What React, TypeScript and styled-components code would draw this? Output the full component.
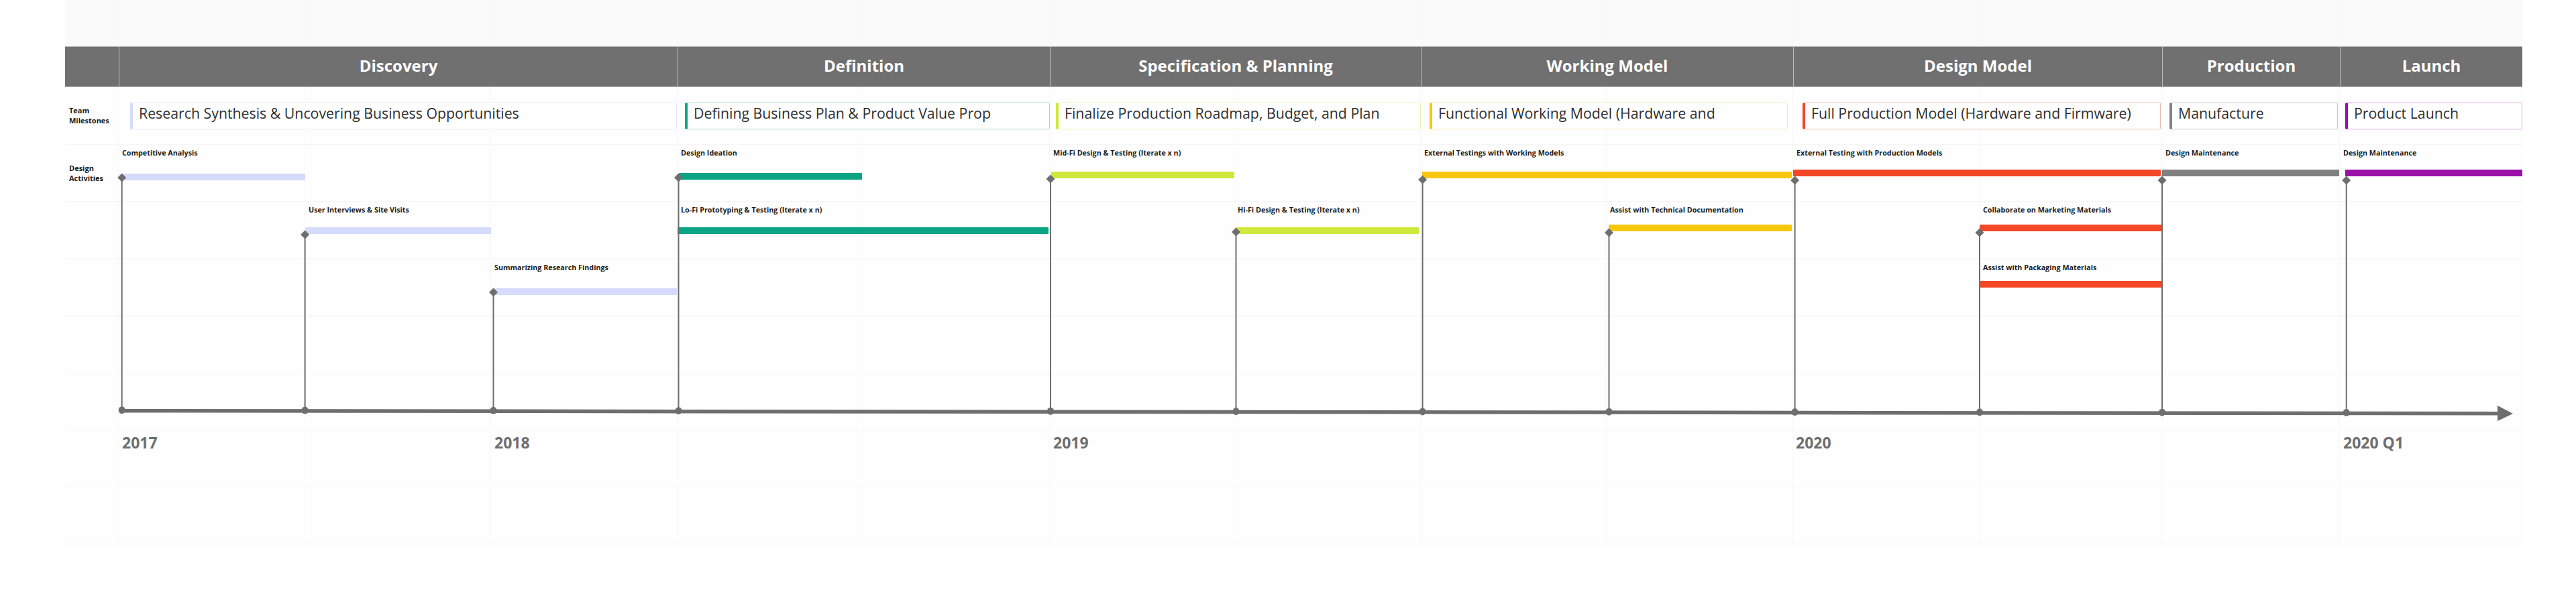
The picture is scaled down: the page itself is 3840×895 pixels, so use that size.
import styled, { createGlobalStyle } from "styled-components";

const ORIGIN_X = 97;
const ORIGIN_Y = 216;
const FONT = `"Open Sans", "Noto Sans", sans-serif`;
const AXIS_COLOR = "#6e6e6e";

const PHASE_TEMPLATE = "80px 833px 555px 553px 555px 550px 265px 272px";
const GRID_COLUMNS = [80, 278, 277, 278, 277, 278, 275, 278, 277, 278, 278, 272, 265, 272];
const GRID_ROWS = [69, 61, 86, 85, 85, 85, 86, 85, 85, 85];

const PHASES = [
    "Discovery",
    "Definition",
    "Specification & Planning",
    "Working Model",
    "Design Model",
    "Production",
    "Launch",
];

const MILESTONES = [
    { text: "Research Synthesis & Uncovering Business Opportunities", color: "#d5dbfa", edge: "#e6e9fa", left: 17, right: 1 },
    { text: "Defining Business Plan & Product Value Prop", color: "#0aa584", edge: "#a5d8cd", left: 11, right: 0 },
    { text: "Finalize Production Roadmap, Budget, and Plan", color: "#cfe83c", edge: "#e9f2b0", left: 9, right: 0 },
    { text: "Functional Working Model (Hardware and", color: "#f7c60f", edge: "#f8e9a8", left: 13, right: 8 },
    { text: "Full Production Model (Hardware and Firmware)", color: "#f34726", edge: "#e8bdb2", left: 14, right: 2 },
    { text: "Manufacture", color: "#808080", edge: "#c4c4c4", left: 11, right: 3 },
    { text: "Product Launch", color: "#990fa8", edge: "#d3a6da", left: 8, right: 0 },
];

const COLORS = {
    periwinkle: "#d5dbfa",
    teal: "#0aa584",
    lime: "#cfe83c",
    yellow: "#f7c60f",
    red: "#f34726",
    gray: "#808080",
    purple: "#990fa8",
};

const ACTIVITIES = [
    { label: "Competitive Analysis", labelX: 182, labelY: 228, x1: 182, x2: 455, y: 259, color: COLORS.periwinkle },
    { label: "User Interviews & Site Visits", labelX: 460, labelY: 313, x1: 455, x2: 732, y: 339, color: COLORS.periwinkle },
    { label: "Summarizing Research Findings", labelX: 737, labelY: 399, x1: 735, x2: 1009, y: 430, color: COLORS.periwinkle },
    { label: "Design Ideation", labelX: 1015, labelY: 228, x1: 1012, x2: 1285, y: 258, color: COLORS.teal },
    { label: "Lo-Fi Prototyping & Testing (Iterate x n)", labelX: 1015, labelY: 313, x1: 1010, x2: 1563, y: 339, color: COLORS.teal },
    { label: "Mid-Fi Design & Testing (Iterate x n)", labelX: 1570, labelY: 228, x1: 1567, x2: 1840, y: 256, color: COLORS.lime },
    { label: "Hi-Fi Design & Testing (Iterate x n)", labelX: 1845, labelY: 313, x1: 1842, x2: 2115, y: 339, color: COLORS.lime },
    { label: "External Testings with Working Models", labelX: 2123, labelY: 228, x1: 2120, x2: 2671, y: 256, color: COLORS.yellow },
    { label: "Assist with Technical Documentation", labelX: 2400, labelY: 313, x1: 2398, x2: 2671, y: 335, color: COLORS.yellow },
    { label: "External Testing with Production Models", labelX: 2678, labelY: 228, x1: 2673, x2: 3221, y: 253, color: COLORS.red },
    { label: "Collaborate on Marketing Materials", labelX: 2956, labelY: 313, x1: 2951, x2: 3223, y: 335, color: COLORS.red },
    { label: "Assist with Packaging Materials", labelX: 2956, labelY: 399, x1: 2952, x2: 3223, y: 419, color: COLORS.red },
    { label: "Design Maintenance", labelX: 3228, labelY: 228, x1: 3223, x2: 3487, y: 253, color: COLORS.gray },
    { label: "Design Maintenance", labelX: 3493, labelY: 228, x1: 3496, x2: 3760, y: 253, color: COLORS.purple },
];

// x of each vertical pin and the y of its diamond
const PINS = [
    { x: 181.7, y: 265 },
    { x: 454.6, y: 350 },
    { x: 735.5, y: 436 },
    { x: 1011.5, y: 265 },
    { x: 1566, y: 267 },
    { x: 1842.5, y: 346 },
    { x: 2120.6, y: 268 },
    { x: 2398.5, y: 347 },
    { x: 2675.6, y: 269 },
    { x: 2951, y: 347 },
    { x: 3223, y: 269 },
    { x: 3497.7, y: 269 },
];

const YEARS = [
    { text: "2017", x: 182 },
    { text: "2018", x: 737 },
    { text: "2019", x: 1570 },
    { text: "2020", x: 2677 },
    { text: "2020 Q1", x: 3493 },
];

const axisY = (x: number) => 612.7 + ((x - 182) * 4) / 3540;

const GlobalStyle = createGlobalStyle`
    html, body {
        margin: 0;
        padding: 0;
        background: #ffffff;
    }
`;

const Page = styled.div`
    width: 3840px;
    height: 895px;
    overflow: hidden;
    padding-left: ${ORIGIN_X}px;
    box-sizing: border-box;
    font-family: ${FONT};
`;

const Board = styled.div`
    position: relative;
    width: 3663px;
    height: 812px;
    padding-top: 69px;
    box-sizing: border-box;
`;

const Backdrop = styled.div`
    position: absolute;
    inset: 0;
    display: grid;
    grid-template-columns: ${GRID_COLUMNS.map((w) => `${w}px`).join(" ")};
    grid-template-rows: ${GRID_ROWS.map((h) => `${h}px`).join(" ")};
    background: #fefefe;
`;

const BackdropCell = styled.div<{ $shaded: boolean }>`
    box-sizing: border-box;
    background: ${({ $shaded }) => ($shaded ? "#fafafa" : "transparent")};
    border-right: 1px solid #f8f8f8;
    border-bottom: 1px solid #f6f6f6;
`;

const PhaseRow = styled.div`
    position: relative;
    display: grid;
    grid-template-columns: ${PHASE_TEMPLATE};
    height: 61px;
    box-sizing: border-box;
    background: #707070;
    border-top: 1px solid #b5b5b5;
    border-bottom: 1px solid #bcbcbc;
`;

const PhaseCell = styled.div`
    display: flex;
    align-items: center;
    justify-content: center;
    padding-bottom: 4px;
    box-sizing: border-box;
    border-left: 1px solid #bdbdbd;
    color: #ffffff;
    font-size: 24px;
    font-weight: 700;
    &:first-child {
        border-left: none;
    }
`;

const MilestoneRow = styled.div`
    position: relative;
    display: grid;
    grid-template-columns: ${PHASE_TEMPLATE};
    height: 86px;
`;

const RowLabel = styled.div`
    padding: 27px 0 0 6px;
    color: #1c1c1c;
    font-size: 11px;
    line-height: 15px;
    font-weight: 700;
`;

const MilestoneCell = styled.div<{ $left: number; $right: number }>`
    padding: 23px ${({ $right }) => $right}px 0 ${({ $left }) => $left}px;
`;

const MilestoneBox = styled.div<{ $color: string; $edge: string }>`
    height: 40px;
    box-sizing: border-box;
    padding-left: 9px;
    background: #ffffff;
    border: 1.5px solid ${({ $edge }) => $edge};
    border-left: 4px solid ${({ $color }) => $color};
    border-radius: 2px;
    color: #2f2f2f;
    font-size: 21.3px;
    line-height: 29px;
    white-space: nowrap;
    overflow: hidden;
`;

const Timeline = styled.div`
    position: relative;
    height: 596px;
`;

const ActivitiesLabel = styled.div`
    position: absolute;
    left: 6px;
    top: 27px;
    color: #1c1c1c;
    font-size: 11px;
    line-height: 15px;
    font-weight: 700;
`;

const TimelineArt = styled.svg`
    position: absolute;
    left: 0;
    top: 0;
    display: block;
`;

const ActivityLabel = styled.div<{ $x: number; $y: number }>`
    position: absolute;
    left: ${({ $x }) => $x - ORIGIN_X}px;
    top: ${({ $y }) => $y - ORIGIN_Y - 7}px;
    color: #1c1c1c;
    font-size: 10.75px;
    line-height: 14px;
    font-weight: 700;
    white-space: nowrap;
`;

const ActivityBar = styled.div<{ $x: number; $width: number; $y: number; $color: string }>`
    position: absolute;
    left: ${({ $x }) => $x - ORIGIN_X}px;
    top: ${({ $y }) => $y - ORIGIN_Y}px;
    width: ${({ $width }) => $width}px;
    height: 10px;
    background: ${({ $color }) => $color};
    border-radius: 1px;
`;

const YearLabel = styled.div<{ $x: number }>`
    position: absolute;
    left: ${({ $x }) => $x - ORIGIN_X}px;
    top: ${662 - ORIGIN_Y - 18}px;
    color: ${AXIS_COLOR};
    font-size: 23px;
    line-height: 32px;
    font-weight: 700;
    white-space: nowrap;
`;

const App = () => {
    return (
        <Page>
            <GlobalStyle />
            <Board>
                <Backdrop>
                    {GRID_ROWS.map((_, row) =>
                        GRID_COLUMNS.map((_, col) => (
                            <BackdropCell key={`${row}-${col}`} $shaded={row === 0} />
                        ))
                    )}
                </Backdrop>
                <PhaseRow>
                    <PhaseCell />
                    {PHASES.map((phase) => (
                        <PhaseCell key={phase}>{phase}</PhaseCell>
                    ))}
                </PhaseRow>
                <MilestoneRow>
                    <RowLabel>
                        Team
                        <br />
                        Milestones
                    </RowLabel>
                    {MILESTONES.map((m) => (
                        <MilestoneCell key={m.text} $left={m.left} $right={m.right}>
                            <MilestoneBox $color={m.color} $edge={m.edge}>
                                {m.text}
                            </MilestoneBox>
                        </MilestoneCell>
                    ))}
                </MilestoneRow>
                <Timeline>
                    <ActivitiesLabel>
                        Design
                        <br />
                        Activities
                    </ActivitiesLabel>
                    {ACTIVITIES.map((a, i) => (
                        <ActivityBar key={i} $x={a.x1} $width={a.x2 - a.x1} $y={a.y} $color={a.color} />
                    ))}
                    <TimelineArt width="3663" height="596" viewBox={`${ORIGIN_X} ${ORIGIN_Y} 3663 596`}>
                        <line x1="182" y1={axisY(182)} x2="3726" y2={axisY(3726)} stroke={AXIS_COLOR} strokeWidth="5.5" />
                        <polygon points="3723,605 3746,617 3723,628" fill={AXIS_COLOR} />
                        {PINS.map((p) => (
                            <g key={p.x} fill={AXIS_COLOR}>
                                <line x1={p.x} y1={p.y} x2={p.x} y2={axisY(p.x)} stroke={AXIS_COLOR} strokeWidth="2" />
                                <polygon points={`${p.x - 6.5},${p.y} ${p.x},${p.y - 6.5} ${p.x + 6.5},${p.y} ${p.x},${p.y + 6.5}`} />
                                <ellipse cx={p.x} cy={axisY(p.x) - 1} rx="5" ry="5.5" />
                            </g>
                        ))}
                    </TimelineArt>
                    {ACTIVITIES.map((a, i) => (
                        <ActivityLabel key={i} $x={a.labelX} $y={a.labelY}>
                            {a.label}
                        </ActivityLabel>
                    ))}
                    {YEARS.map((y) => (
                        <YearLabel key={y.text} $x={y.x}>
                            {y.text}
                        </YearLabel>
                    ))}
                </Timeline>
            </Board>
        </Page>
    );
};

export default App;
